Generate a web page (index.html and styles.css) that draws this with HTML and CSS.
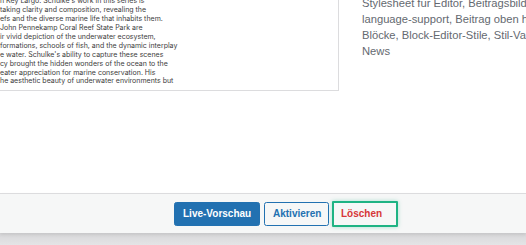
FILE: index.html
```html
<!DOCTYPE html>
<html lang="de">
<head>
    <meta charset="UTF-8">
    <meta name="viewport" content="width=device-width, initial-scale=1.0">
    <title>Theme-Details</title>
    <link rel="stylesheet" href="styles.css">
</head>
<body>
    <div class="overlay">
        <!-- Vorschau und Schlagwörter -->
        <div class="details">
            <div class="screenshot">
                <div class="shot-text">
                    <div>n Key Largo. Schulke's work in this series is</div>
                    <div>taking clarity and composition, revealing the</div>
                    <div>efs and the diverse marine life that inhabits them.</div>
                    <div>John Pennekamp Coral Reef State Park are</div>
                    <div>ir vivid depiction of the underwater ecosystem,</div>
                    <div>formations, schools of fish, and the dynamic interplay</div>
                    <div>e water. Schulke's ability to capture these scenes</div>
                    <div>cy brought the hidden wonders of the ocean to the</div>
                    <div>eater appreciation for marine conservation. His</div>
                    <div>he aesthetic beauty of underwater environments but</div>
                </div>
            </div>
            <div class="theme-tags">
                <div>Stylesheet für Editor, Beitragsbilder, Vollbreite-Vorlage, Hervorhebungen, Vorlagen-Editor, RTL-</div>
                <div>language-support, Beitrag oben halten, Übersetzungsfertig, Breite Blöcke, Website-Editor, Block-</div>
                <div>Blöcke, Block-Editor-Stile, Stil-Varianten, Einspaltig, Zweispaltig, Dreispaltig, Blog, Portfolio,</div>
                <div>News</div>
            </div>
        </div>

        <!-- Aktionen -->
        <div class="theme-actions">
            <button class="button button-primary">Live-Vorschau</button>
            <button class="button button-secondary">Aktivieren</button>
            <button class="button button-delete">Löschen</button>
        </div>
        <div class="backdrop"></div>
    </div>
</body>
</html>
```

FILE: styles.css
```css
html, body {
    margin: 0;
    padding: 0;
    background: #fff;
    overflow: hidden;
}
body {
    font-family: "Liberation Sans", Arial, sans-serif;
    width: 526px;
    height: 245px;
}
.details {
    display: flex;
    height: 193px;
    overflow: hidden;
}
.screenshot {
    flex: none;
    box-sizing: border-box;
    width: 379px;
    height: 103px;
    margin: -12px 0 0 -40px;
    border: 1px solid #dcdcde;
    background: #fff;
    overflow: hidden;
}
.shot-text {
    padding: 8.25px 0 0 39px;
    font-family: Inter, "Noto Sans", sans-serif;
    font-size: 7px;
    line-height: 8.9px;
    color: #3c3c3c;
    white-space: nowrap;
}
.theme-tags {
    flex: none;
    margin: -3.6px 0 0 23px;
    font-size: 11.2px;
    line-height: 15.8px;
    color: #646970;
    white-space: nowrap;
}
.theme-actions {
    display: flex;
    align-items: center;
    gap: 4px;
    height: 39px;
    padding-left: 174px;
    border-top: 1px solid #dcdcde;
    background: #f6f7f7;
    box-shadow: 0 2px 3px rgba(0, 0, 0, 0.08);
    position: relative;
}
.button {
    box-sizing: border-box;
    height: 24px;
    padding: 0 8px;
    border: 1px solid #2271b1;
    border-radius: 2.5px;
    font-family: "Liberation Sans", Arial, sans-serif;
    font-size: 10px;
    font-weight: bold;
    line-height: 22px;
    white-space: nowrap;
    cursor: pointer;
}
.button-primary {
    width: 86px;
    background: #2271b1;
    color: #fff;
}
.button-secondary {
    width: 65px;
    background: #f6f7f7;
    color: #2271b1;
}
.button-delete {
    width: 66px;
    height: 26px;
    margin-left: -1px;
    padding-left: 7px;
    text-align: left;
    border: 2px solid #1fb384;
    border-radius: 1px;
    background: transparent;
    color: #d63638;
    box-shadow: 0 0 4px rgba(31, 179, 132, 0.35);
}
.backdrop {
    height: 12px;
    background: linear-gradient(#d7d7d9, #e4e4e6);
}
```
